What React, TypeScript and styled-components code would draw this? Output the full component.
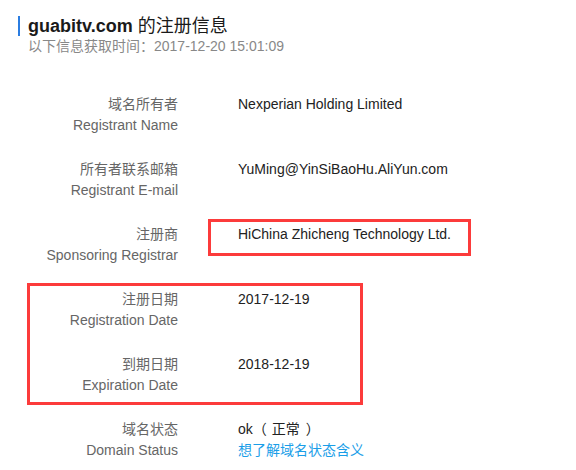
import styled, { createGlobalStyle } from "styled-components";

const GlobalStyle = createGlobalStyle`
	body {
		margin: 0;
		background: #ffffff;
		font-family: "Liberation Sans", Arial, "Noto Sans CJK SC", sans-serif;
		color: #222222;
	}
`;

const Page = styled.div`
	width: 576px;
	height: 470px;
	overflow: hidden;
	padding-top: 16px;
	box-sizing: border-box;
`;

const Title = styled.h1`
	margin: 0 0 0 18px;
	padding-left: 8px;
	border-left: 2px solid #2b7de1;
	font-size: 18px;
	line-height: 20px;
	font-weight: normal;
	color: #1a1a1a;

	b {
		font-weight: bold;
	}
`;

const Subtitle = styled.div`
	margin-left: 28px;
	font-size: 14px;
	line-height: 20px;
	color: #888888;
`;

const List = styled.div`
	margin-top: 38px;
`;

const Group = styled.div`
	position: relative;
`;

const Row = styled.div`
	display: grid;
	grid-template-columns: 178px 1fr;
	column-gap: 60px;
	margin-bottom: 23px;
	font-size: 14px;
	line-height: 21px;
`;

const Label = styled.div`
	display: flex;
	flex-direction: column;
	align-items: flex-end;
	color: #666666;
	white-space: nowrap;
`;

const Value = styled.div`
	position: relative;
	display: flex;
	flex-direction: column;
	align-items: flex-start;
	color: #222222;
	white-space: nowrap;
`;

const Link = styled.a`
	color: #1a9ee8;
	text-decoration: none;
`;

const Paren = styled.span<{ $open?: boolean }>`
	${(p) => (p.$open ? "margin: 0 5px 0 0;" : "margin: 0 0 0 6px;")}
`;

interface FrameProps {
	$left: number;
	$top: number;
	$width: number;
	$height: number;
}

// red annotation boxes drawn over the page
const Frame = styled.div<FrameProps>`
	position: absolute;
	left: ${(p) => p.$left}px;
	top: ${(p) => p.$top}px;
	width: ${(p) => p.$width}px;
	height: ${(p) => p.$height}px;
	box-sizing: border-box;
	border: 3px solid #fc3b3b;
	pointer-events: none;
`;

interface Field {
	zh: string;
	en: string;
	value: React.ReactNode;
	extra?: React.ReactNode;
}

function InfoRow({ zh, en, value, extra }: Field) {
	return (
		<Row>
			<Label>
				<span>{zh}</span>
				<span>{en}</span>
			</Label>
			<Value>
				<span>{value}</span>
				{extra}
			</Value>
		</Row>
	);
}

export default function App() {
	return (
		<Page>
			<GlobalStyle />
			<Title>
				<b>guabitv.com</b> 的注册信息
			</Title>
			<Subtitle>以下信息获取时间：2017-12-20 15:01:09</Subtitle>
			<List>
				<InfoRow zh="域名所有者" en="Registrant Name" value="Nexperian Holding Limited" />
				<InfoRow zh="所有者联系邮箱" en="Registrant E-mail" value="YuMing@YinSiBaoHu.AliYun.com" />
				<InfoRow
					zh="注册商"
					en="Sponsoring Registrar"
					value="HiChina Zhicheng Technology Ltd."
					extra={<Frame $left={-30} $top={-5} $width={263} $height={37} />}
				/>
				<Group>
					<InfoRow zh="注册日期" en="Registration Date" value="2017-12-19" />
					<InfoRow zh="到期日期" en="Expiration Date" value="2018-12-19" />
					<Frame $left={27} $top={-6} $width={336} $height={122} />
				</Group>
				<InfoRow
					zh="域名状态"
					en="Domain Status"
					value={
						<>
							ok<Paren $open>（</Paren>正常<Paren>）</Paren>
						</>
					}
					extra={<Link href="#">想了解域名状态含义</Link>}
				/>
			</List>
		</Page>
	);
}
